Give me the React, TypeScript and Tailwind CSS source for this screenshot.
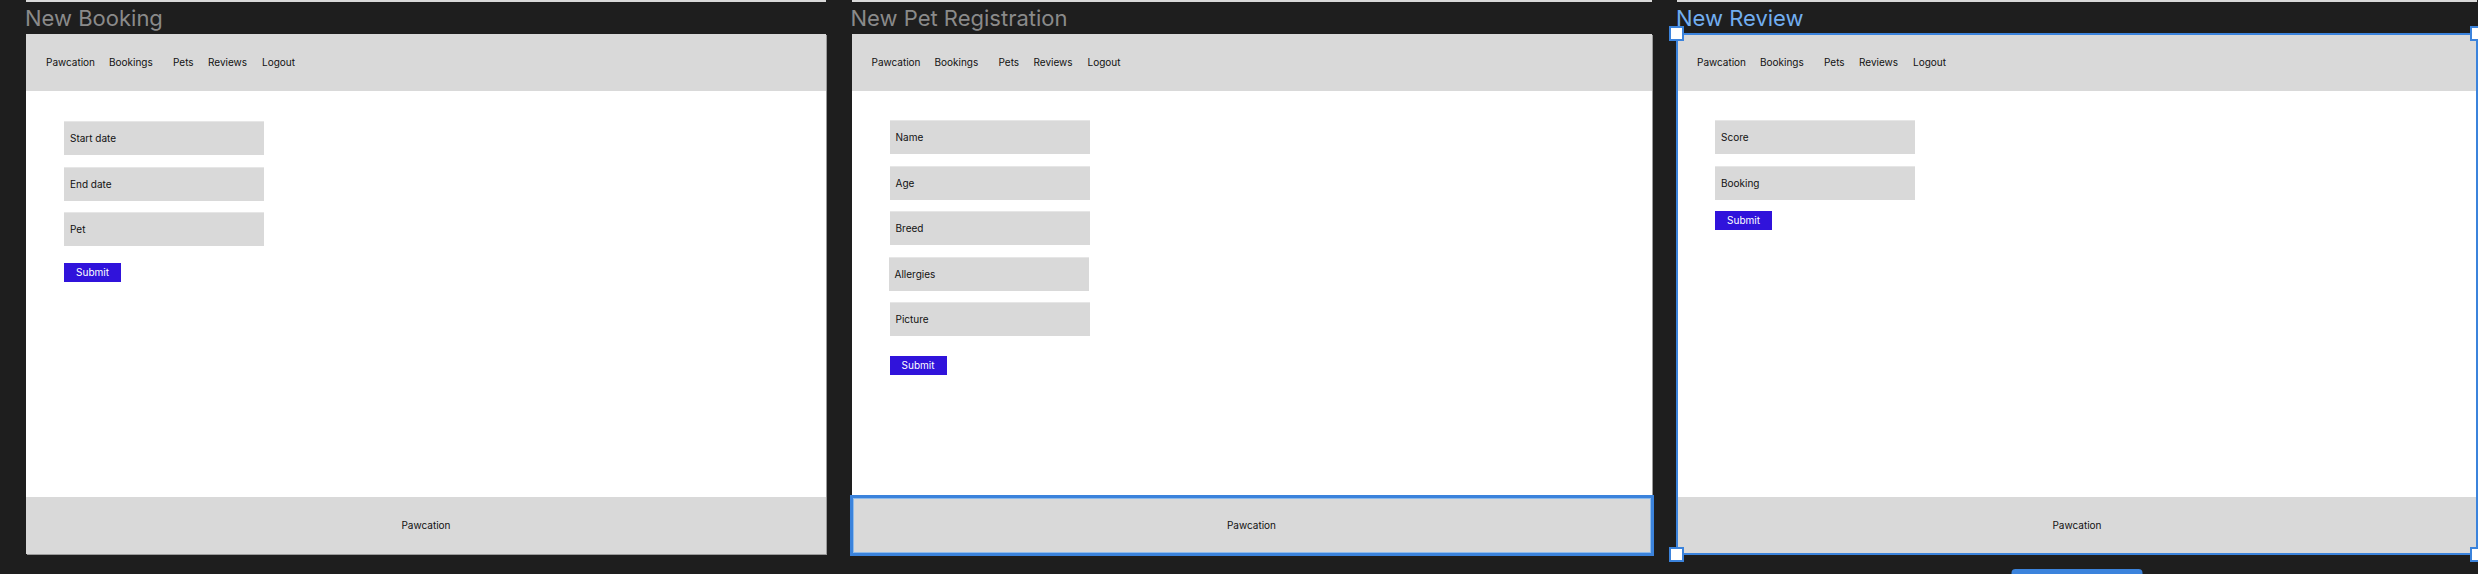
const NAV = [
  { label: 'Pawcation', w: 'w-[63px]' },
  { label: 'Bookings', w: 'w-[64px]' },
  { label: 'Pets', w: 'w-[35px]' },
  { label: 'Reviews', w: 'w-[54px]' },
  { label: 'Logout', w: 'w-[40px]' },
];

type Field = { label: string; shift?: boolean };

function Handle({ pos }: { pos: string }) {
  return (
    <div
      className={`absolute w-[15px] h-[15px] bg-white border-2 border-[#3b83dc] ${pos}`}
    ></div>
  );
}

function Frame({
  title,
  fields,
  top,
  submitGap,
  selected,
  footerSelected,
}: {
  title: string;
  fields: Field[];
  top: string;
  submitGap: string;
  selected?: boolean;
  footerSelected?: boolean;
}) {
  return (
    <div className="w-[800px] shrink-0 flex flex-col">
      {/* bottom edge of the frame above */}
      <div className="h-[2px] bg-[#d9d9d9]"></div>
      <div
        className={`h-[32px] leading-[32px] text-[22px] -ml-[1px] ${
          selected ? 'text-[#72aef0]' : 'text-[#8a8a8a]'
        }`}
      >
        {title}
      </div>

      <div
        className={`relative h-[520px] bg-white flex flex-col ${
          selected ? '' : 'shadow-[1px_1px_0_0_#9a9a9a]'
        }`}
      >
        {/* nav */}
        <div className="h-[57px] bg-[#d9d9d9] flex items-center pl-[20px] text-[10px] text-[#111]">
          {NAV.map((n) => (
            <span key={n.label} className={n.w}>
              {n.label}
            </span>
          ))}
        </div>

        {/* form */}
        <div className={`flex-1 flex flex-col px-[38px] ${top}`}>
          <div className="flex flex-col gap-[11.5px]">
            {fields.map((f) => (
              <div
                key={f.label}
                className={`w-[200px] h-[34px] bg-[#d9d9d9] border-t border-[#e6e6e6] flex items-center pl-[6px] text-[10px] text-[#111] ${
                  f.shift ? '-ml-[1px]' : ''
                }`}
              >
                {f.label}
              </div>
            ))}
          </div>
          <button
            className={`w-[57px] h-[19px] bg-[#3013db] text-white text-[10px] flex items-center justify-center ${submitGap}`}
          >
            Submit
          </button>
        </div>

        {/* footer */}
        <div className="relative h-[57px] bg-[#d9d9d9] flex items-center justify-center text-[10px] text-[#111]">
          Pawcation
          {footerSelected && (
            <div className="absolute -inset-[2px] border-[3px] border-[#3b83dc] shadow-[inset_0_0_0_1px_#8fbbea] pointer-events-none"></div>
          )}
        </div>

        {selected && (
          <>
            <div className="absolute -inset-[1px] border-2 border-[#3b83dc] pointer-events-none"></div>
            <Handle pos="-left-[8px] -top-[8px]" />
            <Handle pos="-right-[8px] -top-[8px]" />
            <Handle pos="-left-[8px] -bottom-[8px]" />
            <Handle pos="-right-[8px] -bottom-[8px]" />
            <div className="absolute left-1/2 -translate-x-1/2 top-[535px] w-[131px] h-[22px] rounded-[4px] bg-[#3b83dc]"></div>
          </>
        )}
      </div>
    </div>
  );
}

export default function App() {
  return (
    <div className="w-[2478px] h-[574px] bg-[#1e1e1e] overflow-hidden font-['Inter',sans-serif]">
      <div className="flex gap-[25.5px] pl-[26px]">
        <Frame
          title="New Booking"
          top="pt-[30px]"
          submitGap="mt-[17px]"
          fields={[{ label: 'Start date' }, { label: 'End date' }, { label: 'Pet' }]}
        />
        <Frame
          title="New Pet Registration"
          top="pt-[29px]"
          submitGap="mt-[20px]"
          footerSelected
          fields={[
            { label: 'Name' },
            { label: 'Age' },
            { label: 'Breed' },
            { label: 'Allergies', shift: true },
            { label: 'Picture' },
          ]}
        />
        <Frame
          title="New Review"
          top="pt-[29px]"
          submitGap="mt-[11.5px]"
          selected
          fields={[{ label: 'Score' }, { label: 'Booking' }]}
        />
      </div>
    </div>
  );
}
